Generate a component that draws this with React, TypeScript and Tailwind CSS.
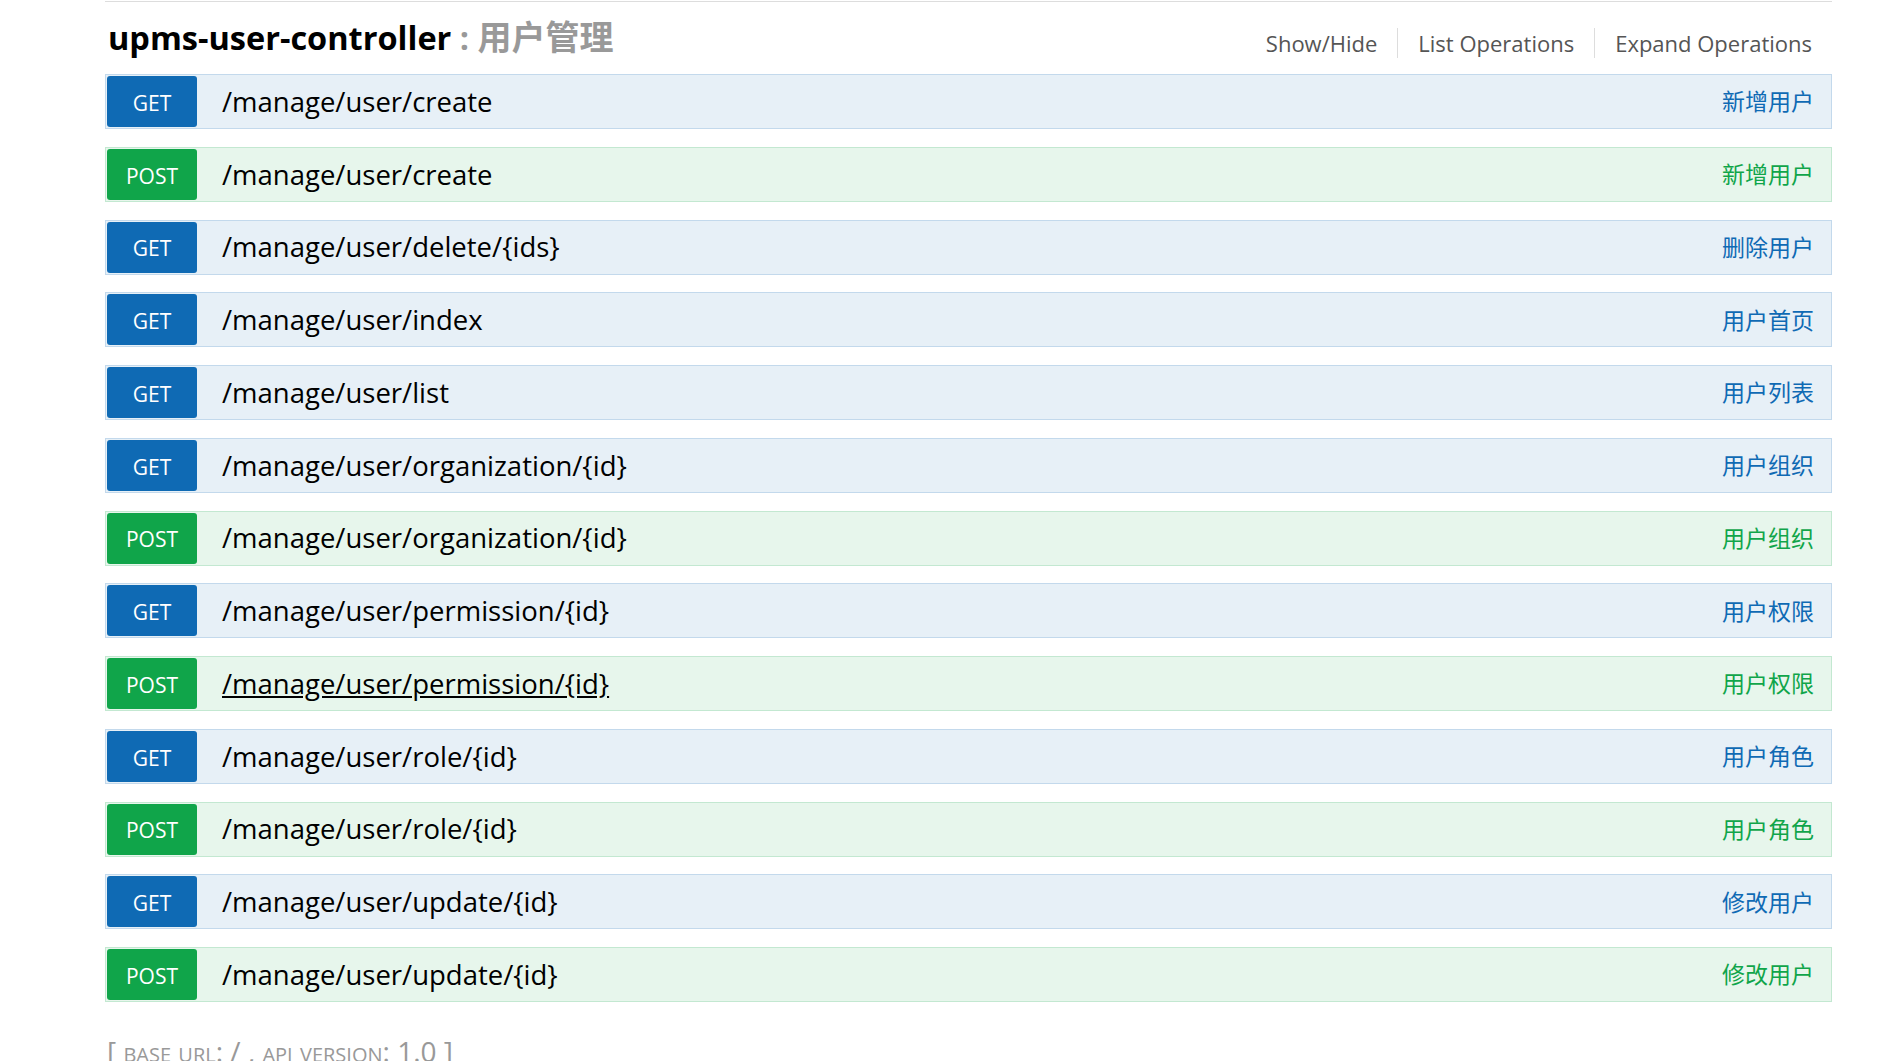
type Op = { method: "GET" | "POST"; path: string; summary: string; hover?: boolean };

const ops: Op[] = [
  { method: "GET", path: "/manage/user/create", summary: "新增用户" },
  { method: "POST", path: "/manage/user/create", summary: "新增用户" },
  { method: "GET", path: "/manage/user/delete/{ids}", summary: "删除用户" },
  { method: "GET", path: "/manage/user/index", summary: "用户首页" },
  { method: "GET", path: "/manage/user/list", summary: "用户列表" },
  { method: "GET", path: "/manage/user/organization/{id}", summary: "用户组织" },
  { method: "POST", path: "/manage/user/organization/{id}", summary: "用户组织" },
  { method: "GET", path: "/manage/user/permission/{id}", summary: "用户权限" },
  { method: "POST", path: "/manage/user/permission/{id}", summary: "用户权限", hover: true },
  { method: "GET", path: "/manage/user/role/{id}", summary: "用户角色" },
  { method: "POST", path: "/manage/user/role/{id}", summary: "用户角色" },
  { method: "GET", path: "/manage/user/update/{id}", summary: "修改用户" },
  { method: "POST", path: "/manage/user/update/{id}", summary: "修改用户" },
];

function OperationRow({ op }: { op: Op }) {
  const get = op.method === "GET";
  return (
    <div
      className={
        get
          ? "flex h-[55px] items-center border border-[#c3d9ec] bg-[#e7f0f7] p-px"
          : "flex h-[55px] items-center border border-[#c3e8d1] bg-[#e7f6ec] p-px"
      }
    >
      <span
        className={
          get
            ? "flex h-full w-[90px] items-center justify-center rounded-[3px] bg-[#0f6ab4] pt-[4px] text-[21px] text-white"
            : "flex h-full w-[90px] items-center justify-center rounded-[3px] bg-[#10a54a] pt-[4px] text-[21px] text-white"
        }
      >
        {op.method}
      </span>
      <span className={op.hover ? "ml-[25px] text-[27.5px] leading-none text-black underline" : "ml-[25px] text-[27.5px] leading-none text-black"}>
        {op.path}
      </span>
      <span className={get ? "ml-auto pr-[16px] text-[23px] text-[#0f6ab4]" : "ml-auto pr-[16px] text-[23px] text-[#10a54a]"}>
        {op.summary}
      </span>
    </div>
  );
}

export default function App() {
  return (
    <div className="min-h-screen overflow-hidden bg-white pl-[105px] pr-[59px] pt-px font-['Open_Sans','Noto_Sans_CJK_SC',sans-serif]">
      <div className="border-t border-[#dddddd]">
        <div className="flex h-[72px] items-start justify-between">
          <h2 className="mt-[15px] pl-[3px] text-[32.5px] font-bold leading-[40px] text-[#999999]">
            <span className="text-black">upms-user-controller</span> : <span className="text-[34px]">用户管理</span>
          </h2>
          <ul className="mt-[26px] flex text-[22px] leading-[30px] text-[#555555]">
            <li className="border-r border-[#dddddd] px-[20px]">Show/Hide</li>
            <li className="border-r border-[#dddddd] px-[20px]">List Operations</li>
            <li className="px-[20px]">Expand Operations</li>
          </ul>
        </div>
        <div className="flex flex-col gap-[17.75px]">
          {ops.map((op, i) => (
            <OperationRow key={i} op={op} />
          ))}
        </div>
        <h4 className="mt-[28px] pl-[2px] text-[28px] text-[#999999]">
          [ <span className="[font-variant:small-caps]">base url</span>: / , <span className="[font-variant:small-caps]">api version</span>: 1.0 ]
        </h4>
      </div>
    </div>
  );
}
